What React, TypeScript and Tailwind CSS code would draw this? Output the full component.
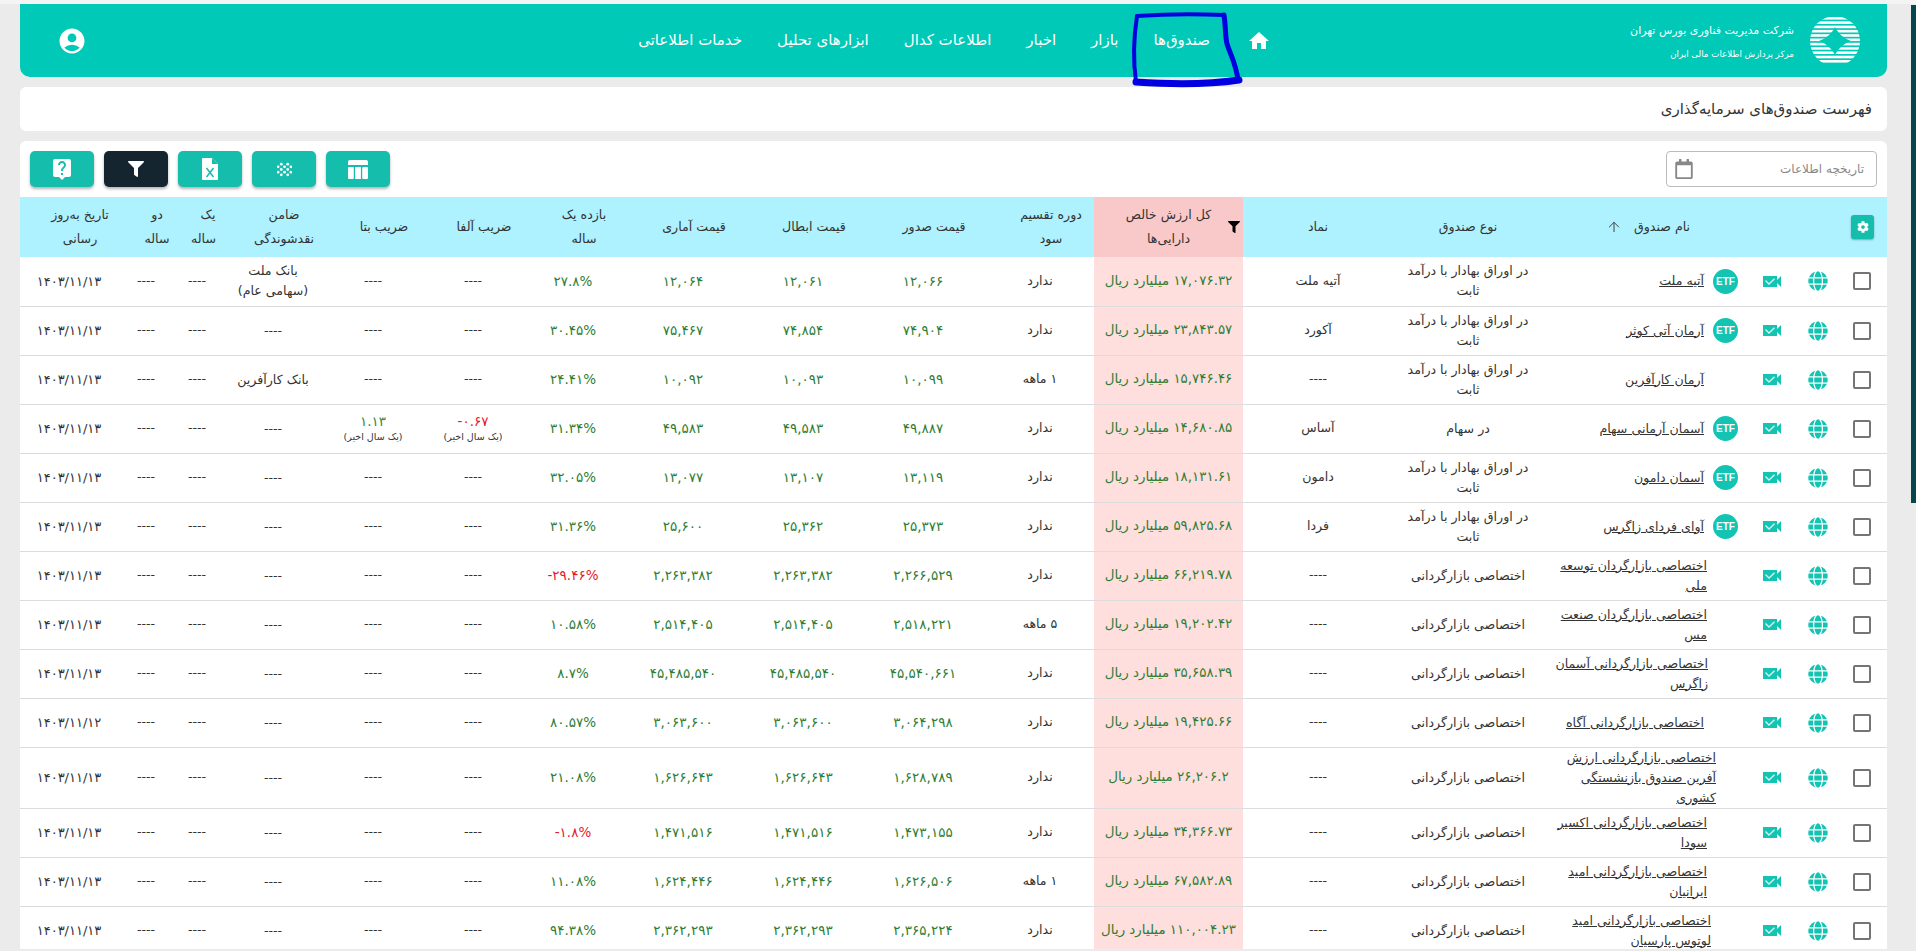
import { ArrowUp } from 'lucide-react';
import { FaCog, FaFilter, FaGlobe, FaRegCalendar } from 'react-icons/fa';
import { MdAccountCircle, MdHome, MdLiveHelp } from 'react-icons/md';

const NA = '----';

const navItems = ['صندوق‌ها', 'بازار', 'اخبار', 'اطلاعات کدال', 'ابزارهای تحلیل', 'خدمات اطلاعاتی'];

const bond = 'در اوراق بهادار با درآمد\nثابت';
const mm = 'اختصاصی بازارگردانی';

type Fund = {
  name: string;
  etf?: boolean;
  shift?: string;
  tall?: boolean;
  type: string;
  symbol: string;
  nav: string;
  period: string;
  issue: string;
  cancel: string;
  stat: string;
  ret: string;
  alpha?: string;
  beta?: string;
  guarantor?: string;
  date?: string;
};

const funds: Fund[] = [
  { name: 'آتیه ملت', etf: true, type: bond, symbol: 'آتیه ملت', nav: '۱۷,۰۷۶.۳۲', period: 'ندارد', issue: '۱۲,۰۶۶', cancel: '۱۲,۰۶۱', stat: '۱۲,۰۶۴', ret: '۲۷.۸%', guarantor: 'بانک ملت\n(سهامی عام)' },
  { name: 'آرمان آتی کوثر', etf: true, type: bond, symbol: 'آکورد', nav: '۲۳,۸۴۳.۵۷', period: 'ندارد', issue: '۷۴,۹۰۴', cancel: '۷۴,۸۵۴', stat: '۷۵,۴۶۷', ret: '۳۰.۴۵%' },
  { name: 'آرمان کارآفرین', type: bond, symbol: NA, nav: '۱۵,۷۴۶.۴۶', period: '۱ ماهه', issue: '۱۰,۰۹۹', cancel: '۱۰,۰۹۳', stat: '۱۰,۰۹۲', ret: '۲۴.۴۱%', guarantor: 'بانک کارآفرین' },
  { name: 'آسمان آرمانی سهام', etf: true, type: 'در سهام', symbol: 'آساس', nav: '۱۴,۶۸۰.۸۵', period: 'ندارد', issue: '۴۹,۸۸۷', cancel: '۴۹,۵۸۳', stat: '۴۹,۵۸۳', ret: '۳۱.۳۴%', alpha: '-۰.۶۷', beta: '۱.۱۳' },
  { name: 'آسمان دامون', etf: true, type: bond, symbol: 'دامون', nav: '۱۸,۱۳۱.۶۱', period: 'ندارد', issue: '۱۳,۱۱۹', cancel: '۱۳,۱۰۷', stat: '۱۳,۰۷۷', ret: '۳۲.۰۵%' },
  { name: 'آوای فردای زاگرس', etf: true, type: bond, symbol: 'فردا', nav: '۵۹,۸۲۵.۶۸', period: 'ندارد', issue: '۲۵,۳۷۳', cancel: '۲۵,۳۶۲', stat: '۲۵,۶۰۰', ret: '۳۱.۳۶%' },
  { name: 'اختصاصی بازارگردان توسعه\nملی', shift: 'mr-[6px]', type: mm, symbol: NA, nav: '۶۶,۲۱۹.۷۸', period: 'ندارد', issue: '۲,۲۶۶,۵۲۹', cancel: '۲,۲۶۳,۳۸۲', stat: '۲,۲۶۳,۳۸۲', ret: '-۲۹.۴۶%' },
  { name: 'اختصاصی بازارگردان صنعت\nمس', shift: 'mr-[6px]', type: mm, symbol: NA, nav: '۱۹,۲۰۲.۴۲', period: '۵ ماهه', issue: '۲,۵۱۸,۲۲۱', cancel: '۲,۵۱۴,۴۰۵', stat: '۲,۵۱۴,۴۰۵', ret: '۱۰.۵۸%' },
  { name: 'اختصاصی بازارگردانی آسمان\nزاگرس', shift: 'mr-[5px]', type: mm, symbol: NA, nav: '۳۵,۶۵۸.۳۹', period: 'ندارد', issue: '۴۵,۵۴۰,۶۶۱', cancel: '۴۵,۴۸۵,۵۴۰', stat: '۴۵,۴۸۵,۵۴۰', ret: '۸.۷%' },
  { name: 'اختصاصی بازارگردانی آگاه', type: mm, symbol: NA, nav: '۱۹,۴۲۵.۶۶', period: 'ندارد', issue: '۳,۰۶۴,۲۹۸', cancel: '۳,۰۶۳,۶۰۰', stat: '۳,۰۶۳,۶۰۰', ret: '۸۰.۵۷%', date: '۱۴۰۳/۱۱/۱۲' },
  { name: 'اختصاصی بازارگردانی ارزش\nآفرین صندوق بازنشستگی\nکشوری', shift: 'mr-[-3px]', tall: true, type: mm, symbol: NA, nav: '۲۶,۲۰۶.۲', period: 'ندارد', issue: '۱,۶۲۸,۷۸۹', cancel: '۱,۶۲۶,۶۴۳', stat: '۱,۶۲۶,۶۴۳', ret: '۲۱.۰۸%' },
  { name: 'اختصاصی بازارگردانی اکسیر\nسودا', shift: 'mr-[6px]', type: mm, symbol: NA, nav: '۳۴,۳۶۶.۷۳', period: 'ندارد', issue: '۱,۴۷۳,۱۵۵', cancel: '۱,۴۷۱,۵۱۶', stat: '۱,۴۷۱,۵۱۶', ret: '-۱.۸%' },
  { name: 'اختصاصی بازارگردانی امید\nایرانیان', shift: 'mr-[6px]', type: mm, symbol: NA, nav: '۶۷,۵۸۲.۸۹', period: '۱ ماهه', issue: '۱,۶۲۶,۵۰۶', cancel: '۱,۶۲۴,۴۴۶', stat: '۱,۶۲۴,۴۴۶', ret: '۱۱.۰۸%' },
  { name: 'اختصاصی بازارگردانی امید\nلوتوس پارسیان', shift: 'mr-[2px]', type: mm, symbol: NA, nav: '۱۱۰,۰۰۴.۲۳', period: 'ندارد', issue: '۲,۳۶۵,۲۲۴', cancel: '۲,۳۶۲,۲۹۳', stat: '۲,۳۶۲,۲۹۳', ret: '۹۴.۳۸%' },
];

function Logo() {
  const ys = [1, 5.3, 9.6, 13.9, 18.2, 22.5, 26.8, 31.1, 35.4, 39.7, 44];
  return (
    <svg width="50" height="50" viewBox="0 0 50 50">
      <defs>
        <clipPath id="disc">
          <circle cx="25" cy="25" r="25" />
        </clipPath>
      </defs>
      <g clipPath="url(#disc)" fill="#fff">
        {ys.map((y) => (
          <rect key={y} x="0" y={y} width="50" height="2.6" />
        ))}
      </g>
      <path d="M25 11 C28 17 33 22 41 25 C33 28 28 33 25 39 C22 33 17 28 9 25 C17 22 22 17 25 11Z" fill="#00c9b7" />
    </svg>
  );
}

function TableIcon() {
  return (
    <svg width="20" height="19" viewBox="0 0 20 19" fill="#fff">
      <path d="M2 0h16a2 2 0 0 1 2 2v3H0V2a2 2 0 0 1 2-2Z" />
      <rect x="0" y="7" width="5.8" height="12" rx="1" />
      <rect x="7.1" y="7" width="5.8" height="12" />
      <rect x="14.2" y="7" width="5.8" height="12" rx="1" />
    </svg>
  );
}

function DotsIcon() {
  const dots = [
    [4, 2], [10, 2], [1, 4.5], [7, 4.5], [13, 4.5], [4, 7], [10, 7], [1, 9.5], [7, 9.5], [13, 9.5], [4, 12], [10, 12],
  ];
  return (
    <svg width="15" height="15" viewBox="0 0 14 14" fill="#fff">
      {dots.map(([x, y]) => (
        <circle key={`${x}-${y}`} cx={x} cy={y} r="1.3" />
      ))}
    </svg>
  );
}

function ExcelIcon() {
  return (
    <svg width="16" height="22" viewBox="0 0 16 22">
      <path d="M1 0h9l6 6v15a1 1 0 0 1-1 1H1a1 1 0 0 1-1-1V1a1 1 0 0 1 1-1Z" fill="#fff" />
      <path d="M10 0v6h6Z" fill="#14bdac" />
      <path d="M4.5 10l7 9M11.5 10l-7 9" stroke="#14bdac" strokeWidth="1.5" fill="none" />
    </svg>
  );
}

function VideoIcon() {
  return (
    <svg width="18" height="11" viewBox="0 0 18 11">
      <rect x="0" y="0" width="14" height="11" fill="#14c4b2" />
      <path d="M14 4 L18 0 V11 L14 7Z" fill="#14c4b2" />
      <path d="M2.5 4.5 L6 8 L11.5 2.8" stroke="#d8f5f1" strokeWidth="1.3" fill="none" />
    </svg>
  );
}

function Marker() {
  return (
    <svg className="absolute left-[1128px] top-[8px] pointer-events-none" width="120" height="84" viewBox="1128 8 120 84" fill="none" stroke="#0000e0" strokeLinecap="round" strokeLinejoin="round">
      <path d="M1137 16 C1165 14 1200 14 1224 15" strokeWidth="4" />
      <path d="M1224 15 C1226 28 1225 36 1227 44 C1231 56 1236 64 1238 80" strokeWidth="5" />
      <path d="M1136 82 C1165 84 1205 85 1239 80" strokeWidth="7" />
      <path d="M1137 16 C1134 35 1133 60 1136 82" strokeWidth="4" />
    </svg>
  );
}

function Head({ children, cls = 'pl-[26px]' }: { children: React.ReactNode; cls?: string }) {
  return <th className={`font-normal text-center leading-[24px] px-1 ${cls}`}>{children}</th>;
}

function Ratio({ value }: { value?: string }) {
  if (!value) return <>{NA}</>;
  return (
    <div className="flex flex-col items-center leading-[16px]">
      <span dir="ltr" className={`text-[13.5px] ${value.startsWith('-') ? 'text-[#e6192b]' : 'text-[#2e8b3e]'}`}>{value}</span>
      <span className="text-[9.5px]">(یک سال اخیر)</span>
    </div>
  );
}

function Row({ f }: { f: Fund }) {
  const num = 'text-center text-[#2e7d32] text-[13.5px]';
  return (
    <tr className={`border-b border-[#dcdcdc] ${f.tall ? 'h-[61px]' : 'h-[49px]'}`}>
      <td className="text-center pr-[2px]">
        <span className="inline-block align-middle w-[18px] h-[18px] border-2 border-[#757575] rounded-[2px]" />
      </td>
      <td className="pr-[2px]">
        <div className="flex justify-center text-[#14c4b2]">
          <FaGlobe size={20} />
        </div>
      </td>
      <td>
        <div className="flex justify-center">
          <VideoIcon />
        </div>
      </td>
      <td>
        <div className="flex items-center pr-[7px]">
          {f.etf ? (
            <span className="w-[25px] h-[25px] shrink-0 rounded-full bg-[#14c4b2] text-white text-[10px] font-bold flex items-center justify-center font-['Liberation_Sans']">
              ETF
            </span>
          ) : (
            <span className="w-[25px] shrink-0" />
          )}
          <a className={`underline whitespace-pre-line leading-[20px] text-[#333] ${f.shift ?? 'mr-[9px]'}`}>{f.name}</a>
        </div>
      </td>
      <td className="text-center whitespace-pre-line leading-[20px]">{f.type}</td>
      <td className="text-center">{f.symbol}</td>
      <td className="text-center bg-[#ffdede] text-[#2e7d32] text-[13.4px]">{f.nav} میلیارد ریال</td>
      <td className="text-center">{f.period}</td>
      <td className={num} dir="ltr">{f.issue}</td>
      <td className={num} dir="ltr">{f.cancel}</td>
      <td className={num} dir="ltr">{f.stat}</td>
      <td className={`text-center text-[13.5px] ${f.ret.startsWith('-') ? 'text-[#e6192b]' : 'text-[#2e7d32]'}`} dir="ltr">{f.ret}</td>
      <td className="text-center"><Ratio value={f.alpha} /></td>
      <td className="text-center"><Ratio value={f.beta} /></td>
      <td className="text-center whitespace-pre-line leading-[20px]">{f.guarantor ?? NA}</td>
      <td className="text-center">{NA}</td>
      <td className="text-center">{NA}</td>
      <td className="text-center text-[13px]" dir="ltr">{f.date ?? '۱۴۰۳/۱۱/۱۳'}</td>
    </tr>
  );
}

export default function App() {
  const button = 'w-[64px] h-[36px] rounded-[5px] shadow-[0_2px_3px_rgba(0,0,0,0.3)] flex items-center justify-center';
  return (
    <div dir="rtl" className="relative h-[951px] overflow-hidden bg-[#ebebeb] font-['DejaVu_Sans',sans-serif] text-[12.6px] text-[#333]">
      <div className="h-[4px] bg-[#f4f4f4]" />
      <div className="pr-[29px] pl-[20px]">
        <header className="h-[73px] rounded-b-[10px] bg-[#00c9b7] flex items-center text-white">
          <div className="mr-[27px]">
            <Logo />
          </div>
          <div className="mr-[16px] mt-[4px] w-[164px] flex flex-col gap-[9px]">
            <span className="text-[11px] leading-[14px] whitespace-nowrap">شرکت مدیریت فناوری بورس تهران</span>
            <span className="text-[8.7px] leading-[14px] whitespace-nowrap">مرکز پردازش اطلاعات مالی ایران</span>
          </div>
          <nav className="mr-[359px] flex items-center gap-[35px] text-[15px]">
            <MdHome size={24} className="ml-[2px]" />
            {navItems.map((item) => (
              <a key={item} className="whitespace-nowrap">{item}</a>
            ))}
          </nav>
          <MdAccountCircle size={30} className="mr-auto ml-[37px]" />
        </header>

        <div className="mt-[10px] h-[44px] rounded-[6px] bg-white flex items-center pr-[15px] text-[15px]">
          فهرست صندوق‌های سرمایه‌گذاری
        </div>

        <div className="mt-[10px] h-[808px] overflow-hidden rounded-t-[6px] bg-white">
          <div className="h-[56px] flex items-center justify-between px-[10px]">
            <div className="w-[211px] h-[36px] rounded-[4px] border border-[#bbb] flex items-center justify-between pr-[12px] pl-[7px] text-[12px] text-[#888]">
              <span>تاریخچه اطلاعات</span>
              <FaRegCalendar size={20} />
            </div>
            <div className="flex gap-[10px]">
              <button className={`${button} bg-[#14bdac]`}><TableIcon /></button>
              <button className={`${button} bg-[#14bdac]`}><DotsIcon /></button>
              <button className={`${button} bg-[#14bdac]`}><ExcelIcon /></button>
              <button className={`${button} bg-[#15252f] text-white`}><FaFilter size={16} /></button>
              <button className={`${button} bg-[#14bdac] text-white`}><MdLiveHelp size={24} /></button>
            </div>
          </div>

          <table className="table-fixed w-[1867px] border-collapse">
            <colgroup>
              <col className="w-[49px]" />
              <col className="w-[39px]" />
              <col className="w-[54px]" />
              <col className="w-[202px]" />
              <col className="w-[150px]" />
              <col className="w-[150px]" />
              <col className="w-[149px]" />
              <col className="w-[108px]" />
              <col className="w-[126px]" />
              <col className="w-[114px]" />
              <col className="w-[126px]" />
              <col className="w-[94px]" />
              <col className="w-[106px]" />
              <col className="w-[94px]" />
              <col className="w-[106px]" />
              <col className="w-[46px]" />
              <col className="w-[56px]" />
              <col className="w-[98px]" />
            </colgroup>
            <thead>
              <tr className="h-[60px] bg-[#aef1ff]">
                <th className="text-center">
                  <span className="inline-flex w-[23px] h-[24px] items-center justify-center align-middle rounded-[3px] bg-[#14bdac] text-white shadow-[0_1px_2px_rgba(0,0,0,0.3)]">
                    <FaCog size={12} />
                  </span>
                </th>
                <th />
                <th />
                <th className="font-normal">
                  <div className="flex items-center justify-center gap-[12px] pl-[8px]">
                    <span>نام صندوق</span>
                    <ArrowUp size={16} strokeWidth={1.5} className="text-[#444]" />
                  </div>
                </th>
                <Head cls="">نوع صندوق</Head>
                <Head cls="">نماد</Head>
                <th className="relative font-normal text-center bg-[#f9c9c9] leading-[24px] px-[20px]">
                  کل ارزش خالص دارایی‌ها
                  <FaFilter size={12} className="absolute right-[3px] top-[24px] text-black" />
                </th>
                <Head>دوره تقسیم سود</Head>
                <Head>قیمت صدور</Head>
                <Head>قیمت ابطال</Head>
                <Head>قیمت آماری</Head>
                <Head>بازده یک ساله</Head>
                <Head>ضریب آلفا</Head>
                <Head>ضریب بتا</Head>
                <Head>ضامن نقدشوندگی</Head>
                <Head>یک ساله</Head>
                <Head>دو ساله</Head>
                <Head>تاریخ به‌روز رسانی</Head>
              </tr>
            </thead>
            <tbody>
              {funds.map((f) => (
                <Row key={f.name} f={f} />
              ))}
            </tbody>
          </table>
        </div>
      </div>
      <Marker />
      <div className="absolute right-0 top-[5px] w-[5px] h-[498px] bg-[#04484d]" />
    </div>
  );
}
